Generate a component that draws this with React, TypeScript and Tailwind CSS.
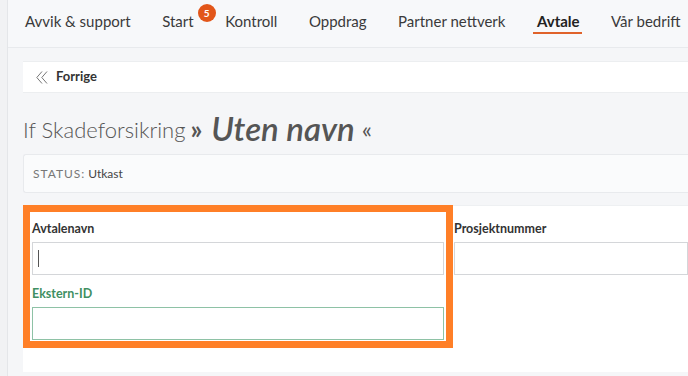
const navItems = ['Avvik & support', 'Start', 'Kontroll', 'Oppdrag', 'Partner nettverk', 'Avtale', 'Vår bedrift'];

const Field = ({ label, green, caret }: { label: string; green?: boolean; caret?: boolean }) => (
  <div className="flex flex-col">
    <label
      className={`h-[16px] text-[12.5px] font-bold leading-[16px] ${green ? 'text-[#3f8f62]' : 'text-[#333]'}`}
    >
      {label}
    </label>
    <div
      className={`mt-[5px] flex h-[33px] items-center border bg-white px-[5px] ${green ? 'border-[#8ec2a6]' : 'border-[#d4d6d9]'}`}
    >
      {caret && <span className="h-[17px] w-px bg-[#555]" />}
    </div>
  </div>
);

export default function App() {
  return (
    <div className="flex h-[376px] w-[688px] overflow-hidden bg-[#f5f6f8] text-[#333]" style={{ fontFamily: 'Lato, "Open Sans", sans-serif' }}>
      <div className="w-[8px] shrink-0 border-r border-[#e4e6e9] bg-[#f1f2f4]" />
      <div className="flex min-w-0 flex-1 flex-col">
        <nav className="flex h-[48px] shrink-0 items-stretch gap-[31.5px] border-b border-[#e8eaed] bg-[#f7f8fa] pl-[17px] text-[15px] text-[#3a3a3a]">
          {navItems.map((item) => (
            <div key={item} className="relative flex items-center pb-[4px]">
              <span className={item === 'Avtale' ? 'font-bold text-[#222]' : ''}>{item}</span>
              {item === 'Avtale' && (
                <span className="absolute bottom-[13px] left-[-4px] right-[-2px] h-[2px] bg-[#e0622a]" />
              )}
              {item === 'Start' && (
                <span className="absolute right-[-22px] top-[4px] flex h-[18px] w-[18px] items-center justify-center rounded-full bg-[#e2561a] text-[10px] font-bold text-white">
                  5
                </span>
              )}
            </div>
          ))}
        </nav>

        <div className="flex flex-1 flex-col pl-[15px]">
          <div className="mt-[13px] flex h-[32px] items-center gap-[8px] border-y border-[#eceef0] bg-white pl-[13px]">
            <svg width="12" height="13" viewBox="0 0 12 13" fill="none" stroke="#777" strokeWidth="1">
              <path d="M6 0.5L0.8 6.5L6 12.5" />
              <path d="M11 0.5L5.8 6.5L11 12.5" />
            </svg>
            <span className="text-[13px] font-bold text-[#333]">Forrige</span>
          </div>

          <h1 className="mt-[18px] flex h-[36px] items-center whitespace-nowrap text-[#555]">
            <span className="text-[22px] font-light">If Skadeforsikring</span>
            <span className="ml-[5px] text-[26px] font-bold">»</span>
            <span className="ml-[9px] text-[33px] font-semibold italic">Uten navn</span>
            <span className="ml-[7px] text-[24px]">«</span>
          </h1>

          <div className="mt-[7px] flex h-[39px] items-center rounded-l-[3px] border border-r-0 border-[#e8eaed] bg-[#fafbfc] pl-[9px] text-[12px]">
            <span className="uppercase tracking-[0.08em] text-[#777]">Status:</span>
            <span className="ml-[3px] text-[#444]">Utkast</span>
          </div>

          <div className="mt-[12px] flex h-[167px] items-start border-t border-[#eef0f2] bg-white">
            <div className="-mt-px w-[430px] shrink-0 border-[7px] border-[#ff7f27] px-[2px] pb-[1px] pt-[9px]">
              <Field label="Avtalenavn" caret />
              <div className="mt-[11px]">
                <Field label="Ekstern-ID" green />
              </div>
            </div>
            <div className="flex-1 pl-px pt-[15px]">
              <Field label="Prosjektnummer" />
            </div>
          </div>
        </div>
      </div>
    </div>
  );
}
